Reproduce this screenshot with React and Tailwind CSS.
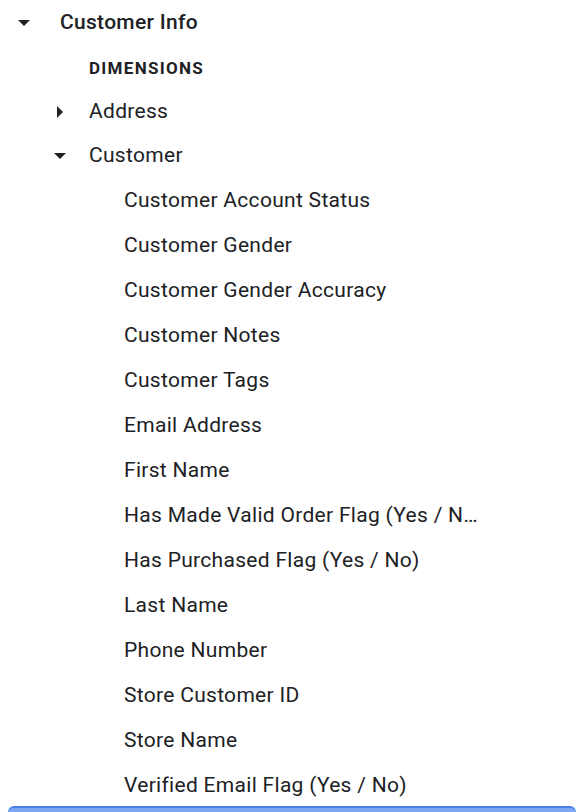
import React from 'react';

const fields = [
  'Customer Account Status',
  'Customer Gender',
  'Customer Gender Accuracy',
  'Customer Notes',
  'Customer Tags',
  'Email Address',
  'First Name',
  'Has Made Valid Order Flag (Yes / No)',
  'Has Purchased Flag (Yes / No)',
  'Last Name',
  'Phone Number',
  'Store Customer ID',
  'Store Name',
  'Verified Email Flag (Yes / No)',
];

const CaretDown = () => (
  <svg width="12" height="6" viewBox="0 0 12 6" className="fill-[#202124]">
    <path d="M0 0h12L6 6z" />
  </svg>
);

const CaretRight = () => (
  <svg width="6" height="12" viewBox="0 0 6 12" className="fill-[#202124]">
    <path d="M0 0l6 6-6 6z" />
  </svg>
);

export default function App() {
  return (
    <div
      className="relative h-[812px] w-[578px] overflow-hidden bg-white pt-[1px] text-[#202124]"
      style={{ fontFamily: 'Roboto, "Liberation Sans", sans-serif' }}
    >
      {/* group header */}
      <div className="flex h-[43px] items-center">
        <div className="flex w-[60px] justify-center pr-[12px]">
          <CaretDown />
        </div>
        <span className="text-[21px] font-medium tracking-[0.3px]">Customer Info</span>
      </div>

      <div className="flex h-[46px] items-center pl-[89px] pt-[4px]">
        <span className="text-[17px] font-bold tracking-[1.3px]">DIMENSIONS</span>
      </div>

      <div className="flex h-[43px] items-center">
        <div className="flex w-[89px] justify-end pr-[26px]">
          <CaretRight />
        </div>
        <span className="text-[21px] tracking-[0.3px]">Address</span>
      </div>

      <div className="flex h-[45px] items-center">
        <div className="flex w-[89px] justify-end pr-[23px]">
          <CaretDown />
        </div>
        <span className="text-[21px] tracking-[0.3px]">Customer</span>
      </div>

      <ul>
        {fields.map((f) => (
          <li key={f} className="flex h-[45px] items-center pl-[124px]">
            <span className="max-w-[354px] truncate text-[21px] tracking-[0.3px]">{f}</span>
          </li>
        ))}
      </ul>

      <div className="absolute left-[8px] right-[2px] top-[806px] h-[20px] rounded-t-[6px] border-t-2 border-[#4a80e8] bg-[#7ba7f2]" />
    </div>
  );
}
